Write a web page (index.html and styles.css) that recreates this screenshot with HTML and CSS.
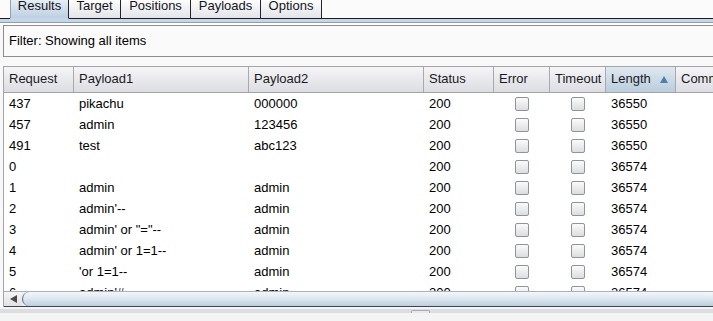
FILE: index.html
```html
<!DOCTYPE html>
<html lang="en">
<head>
  <meta charset="UTF-8" />
  <title>Intruder Results</title>
  <link rel="stylesheet" href="styles.css">
</head>
<body>
  <div class="tabs">
    <div class="tab-gap"></div>
    <div class="tab active" style="width: 59px">Results</div>
    <div class="tab" style="width: 52px">Target</div>
    <div class="tab" style="width: 70px">Positions</div>
    <div class="tab" style="width: 70px">Payloads</div>
    <div class="tab" style="width: 61px">Options</div>
    <div class="tab-fill"></div>
  </div>
  <div class="tab-rule"></div>

  <div class="panel">
    <div class="filter">Filter: Showing all items</div>

    <div class="table">
      <div class="row head">
        <div class="cell">Request</div>
        <div class="cell">Payload1</div>
        <div class="cell">Payload2</div>
        <div class="cell">Status</div>
        <div class="cell">Error</div>
        <div class="cell">Timeout</div>
        <div class="cell sorted">Length <span class="sort-up"></span></div>
        <div class="cell">Comment</div>
      </div>

      <div class="body" id="rows"></div>

      <div class="hscroll">
        <div class="arrow-btn"><span class="arrow-left"></span></div>
        <div class="thumb"></div>
      </div>
    </div>
  </div>

  <div class="splitter"><span class="grip"></span></div>

  <script>
    const results = [
      ["437", "pikachu", "000000", "200", "36550"],
      ["457", "admin", "123456", "200", "36550"],
      ["491", "test", "abc123", "200", "36550"],
      ["0", "", "", "200", "36574"],
      ["1", "admin", "admin", "200", "36574"],
      ["2", "admin'--", "admin", "200", "36574"],
      ["3", "admin' or \"=\"--", "admin", "200", "36574"],
      ["4", "admin' or 1=1--", "admin", "200", "36574"],
      ["5", "'or 1=1--", "admin", "200", "36574"],
      ["6", "admin'#", "admin", "200", "36574"]
    ];

    const body = document.getElementById("rows");
    results.forEach(r => {
      const row = document.createElement("div");
      row.className = "row";
      row.innerHTML =
        `<div class="cell">${r[0]}</div>` +
        `<div class="cell">${r[1]}</div>` +
        `<div class="cell">${r[2]}</div>` +
        `<div class="cell">${r[3]}</div>` +
        `<div class="cell center"><span class="check"></span></div>` +
        `<div class="cell center"><span class="check"></span></div>` +
        `<div class="cell">${r[4]}</div>` +
        `<div class="cell"></div>`;
      body.appendChild(row);
    });
  </script>
</body>
</html>
```

FILE: styles.css
```css
body {
  margin: 0;
  font-family: "Liberation Sans", Arial, sans-serif;
  font-size: 13px;
  color: #000;
  background: #f4f4f4;
  overflow: hidden;
  width: 713px;
  height: 321px;
}

/* tab strip */
.tabs {
  display: flex;
  height: 19px;
  background: #fbfbfb;
}

.tab-gap {
  width: 10px;
  border-bottom: 1px solid #1c1c24;
}

.tab-fill {
  flex: 1;
  border-bottom: 1px solid #1c1c24;
}

.tab {
  box-sizing: border-box;
  text-align: center;
  line-height: 12px;
  padding-top: 0;
  border-right: 1px solid #23232b;
  border-bottom: 1px solid #1c1c24;
  background: linear-gradient(#fdfdfd, #e3e4e9);
  color: #15151d;
}

.tab.active {
  border-left: 1px solid #8fa3b8;
  border-bottom: 1px solid #c6d6e6;
  background: linear-gradient(#e7eef5, #bccfe1);
}

.tab-rule {
  height: 6px;
  background: linear-gradient(
    #c6d6e6 0, #c6d6e6 3px,
    #8b9fb4 3px, #8b9fb4 4px,
    #ffffff 4px, #ffffff 6px
  );
}

.panel {
  padding-left: 3px;
  background: #f8f8f8;
}

.filter {
  height: 30px;
  line-height: 30px;
  padding-left: 5px;
  border: 1px solid #8e8e8e;
  border-right: none;
  background: #fafafa;
  margin-bottom: 9px;
}

/* results table */
.table {
  border-left: 1px solid #a3a3a8;
  border-top: 1px solid #a3a3a8;
  background: #fff;
  width: 760px;
}

.row {
  display: grid;
  grid-template-columns: 70px 175px 175px 70px 56px 56px 70px 1fr;
  height: 21px;
  align-items: center;
}

.row .cell {
  box-sizing: border-box;
  padding-left: 5px;
  white-space: nowrap;
  overflow: hidden;
}

.row .cell.center {
  padding-left: 0;
  display: flex;
  justify-content: center;
}

.head {
  height: 25px;
  align-items: stretch;
  border-bottom: 1px solid #a3a3a8;
  background: linear-gradient(#f5f5f7, #dcdde2);
  color: #1a1a24;
}

.head .cell {
  border-right: 1px solid #a8a9b0;
  line-height: 24px;
  position: relative;
}

.head .cell.sorted {
  background: linear-gradient(#dfe8f0, #b9cddc);
}

.sort-up {
  position: absolute;
  right: 7px;
  top: 9px;
  width: 0;
  height: 0;
  border-left: 4px solid transparent;
  border-right: 4px solid transparent;
  border-bottom: 7px solid #4d7eae;
}

.body {
  height: 198px;
  overflow: hidden;
}

.check {
  width: 12px;
  height: 12px;
  border: 1px solid #8f949a;
  border-radius: 2px;
  background: linear-gradient(#fbfbfb, #dcdde1);
}

/* horizontal scrollbar */
.hscroll {
  display: flex;
  height: 14px;
  border-top: 1px solid #a8b2bc;
  border-bottom: 1px solid #3d4650;
  background: #e8eef3;
}

.arrow-btn {
  width: 18px;
  display: flex;
  align-items: center;
  justify-content: center;
  background: linear-gradient(#f4f4f4, #e2e2e2);
}

.arrow-left {
  width: 0;
  height: 0;
  border-top: 4px solid transparent;
  border-bottom: 4px solid transparent;
  border-right: 7px solid #4a4a4a;
}

.thumb {
  flex: 1;
  border-left: 1px solid #5a6a7a;
  border-radius: 10px 0 0 10px;
  background: linear-gradient(#f4f7fa, #d9e4ee 55%, #bccfde);
}

.splitter {
  margin-top: 2px;
  height: 4px;
  background: #dcdde1;
  position: relative;
}

.grip {
  position: absolute;
  left: 411px;
  top: 1px;
  width: 17px;
  height: 2px;
  border: 1px solid #a9adb4;
  border-bottom: none;
  border-radius: 2px 2px 0 0;
  background: #e6e8ec;
}
```
